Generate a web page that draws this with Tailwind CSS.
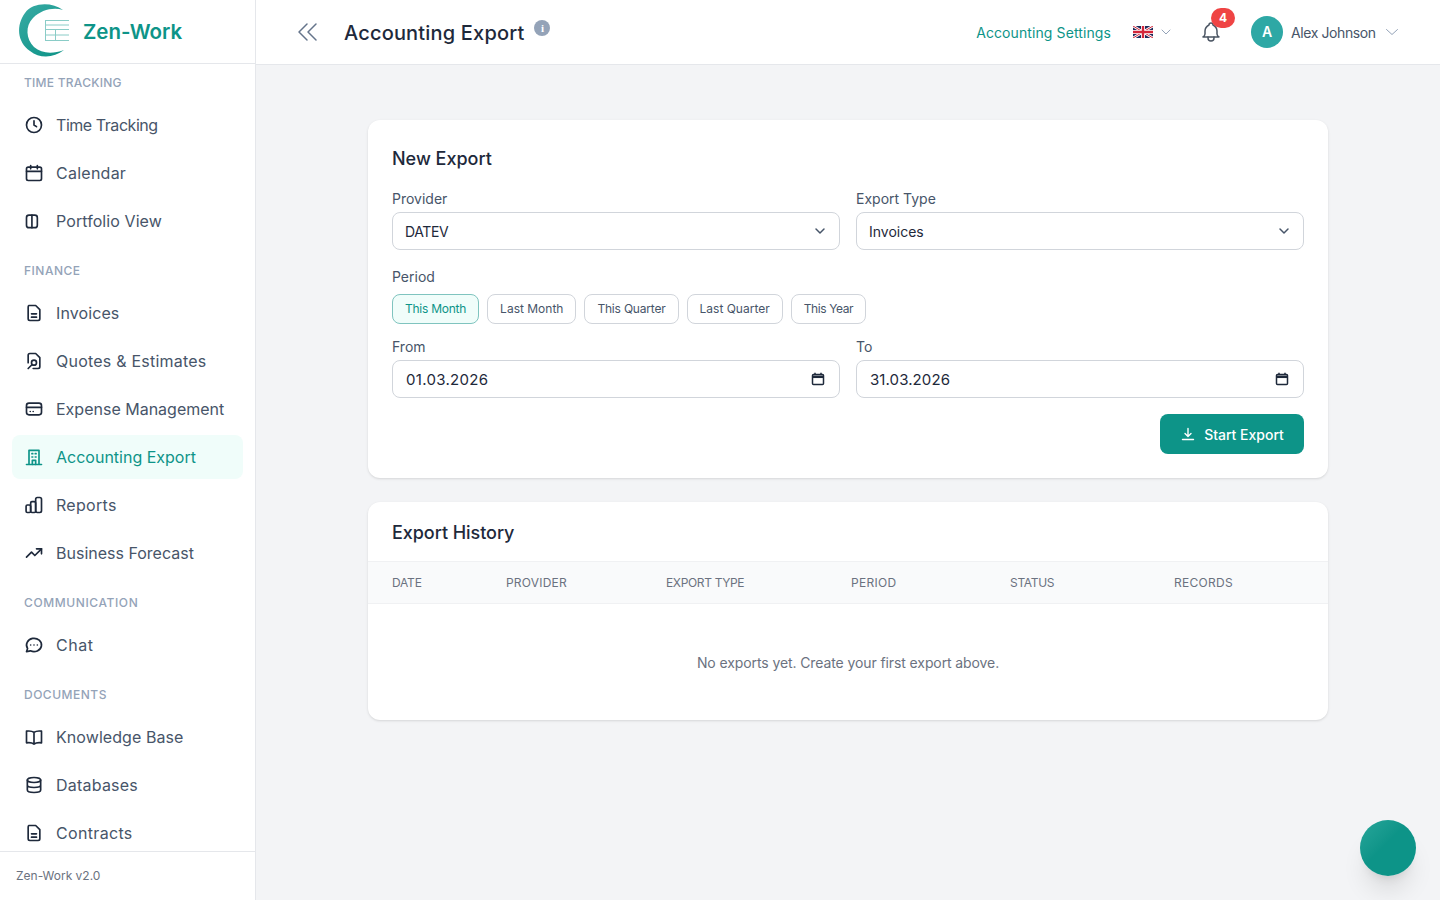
<!DOCTYPE html>
<html lang="en">
<head>
    <meta charset="UTF-8">
    <title>Accounting Export - Zen-Work</title>
    <script src="https://cdn.jsdelivr.net/npm/@tailwindcss/browser@4"></script>
</head>
<body class="font-['Inter',sans-serif] bg-[#f3f4f6]">
<div class="flex h-[900px] w-[1440px] overflow-hidden">
    <!-- Sidebar -->
    <aside class="w-[256px] shrink-0 h-full bg-white border-r border-[#e5e7eb] flex flex-col">
        <div class="h-[64px] shrink-0 border-b border-[#e5e7eb] flex items-center relative">
            <svg class="absolute left-0 top-0" width="80" height="64" viewBox="0 0 80 64" fill="none">
                <defs>
                    <linearGradient id="logoArc" x1="20" y1="10" x2="60" y2="56" gradientUnits="userSpaceOnUse">
                        <stop offset="0" stop-color="#35a9a2"/>
                        <stop offset="1" stop-color="#0f9488"/>
                    </linearGradient>
                </defs>
                <path d="M63 10C52 2 33 2 25 13C16 25 17 42 30 51C40 59 54 58 64 50C53 54 42 54 34 47C26 39 25 26 33 18C41 10 53 7 63 10Z" fill="url(#logoArc)"/>
                <g stroke="#8accc7" stroke-width="1">
                    <path d="M45 20.500H69M45 25H69M45 29.500H69M45 35H69M45 40.500H69"/>
                    <path d="M45.500 20V41M55.500 30V41"/>
                </g>
            </svg>
            <span class="ml-[83px] mt-[2px] text-[20.500px] tracking-[-0.05px] font-semibold text-[#0d9488] leading-none">Zen-Work</span>
        </div>
        <nav class="flex-1 overflow-hidden pt-[11px] px-3">
            <div class="text-xs font-medium leading-4 tracking-[0.25px] text-[#94a3b8] px-3 mb-[12px]">TIME TRACKING</div>
            <div class="flex flex-col gap-1">
                <a class="h-[44px] rounded-lg flex items-center gap-3 px-3 text-base tracking-[-0.45px] text-[#475569]">
                    <svg class="w-5 h-5 text-[#1e293b]" viewBox="0 0 24 24" fill="none" stroke="currentColor" stroke-width="2" stroke-linecap="round" stroke-linejoin="round"><circle cx="12" cy="12" r="9"/><path d="M12 7v5l3 2"/></svg>
                    Time Tracking
                </a>
                <a class="h-[44px] rounded-lg flex items-center gap-3 px-3 text-base tracking-[0.25px] text-[#475569]">
                    <svg class="w-5 h-5 text-[#1e293b]" viewBox="0 0 24 24" fill="none" stroke="currentColor" stroke-width="2" stroke-linecap="round" stroke-linejoin="round"><rect x="3" y="5" width="18" height="16" rx="2"/><path d="M8 3v4M16 3v4M3 10h18"/></svg>
                    Calendar
                </a>
                <a class="h-[44px] rounded-lg flex items-center gap-3 px-3 text-base tracking-[0.08px] text-[#475569]">
                    <svg class="w-5 h-5 text-[#1e293b]" viewBox="0 0 24 24" fill="none" stroke="currentColor" stroke-width="2" stroke-linecap="round" stroke-linejoin="round"><rect x="3" y="5" width="13" height="15" rx="3"/><path d="M9.500 5v15"/></svg>
                    Portfolio View
                </a>
            </div>
            <div class="text-xs font-medium leading-4 tracking-[0.5px] text-[#94a3b8] px-3 mt-[20px] mb-[12px]">FINANCE</div>
            <div class="flex flex-col gap-1">
                <a class="h-[44px] rounded-lg flex items-center gap-3 px-3 text-base tracking-[0.1px] text-[#475569]">
                    <svg class="w-5 h-5 text-[#1e293b]" viewBox="0 0 24 24" fill="none" stroke="currentColor" stroke-width="2" stroke-linecap="round" stroke-linejoin="round"><path d="M6 3h8l5 5v11a2 2 0 0 1-2 2H7a2 2 0 0 1-2-2V5a2 2 0 0 1 1-2z"/><path d="M9 13h6M9 17h6"/></svg>
                    Invoices
                </a>
                <a class="h-[44px] rounded-lg flex items-center gap-3 px-3 text-base tracking-[0.22px] text-[#475569]">
                    <svg class="w-5 h-5 text-[#1e293b]" viewBox="0 0 24 24" fill="none" stroke="currentColor" stroke-width="2" stroke-linecap="round" stroke-linejoin="round"><path d="M5 14V5a2 2 0 0 1 2-2h7l5 5v11a2 2 0 0 1-2 2h-6"/><circle cx="12" cy="14" r="3"/><path d="M9.500 16.500L5 21"/></svg>
                    Quotes &amp; Estimates
                </a>
                <a class="h-[44px] rounded-lg flex items-center gap-3 px-3 text-base text-[#475569]">
                    <svg class="w-5 h-5 text-[#1e293b]" viewBox="0 0 24 24" fill="none" stroke="currentColor" stroke-width="2" stroke-linecap="round" stroke-linejoin="round"><rect x="3" y="5" width="18" height="14" rx="3"/><path d="M3 10h18M7.500 15h.01M11 15h.01"/></svg>
                    Expense Management
                </a>
                <a class="h-[44px] rounded-lg flex items-center gap-3 px-3 text-base text-[#0d9488] bg-[#f0fdfa]">
                    <svg class="w-5 h-5" viewBox="0 0 24 24" fill="none" stroke="currentColor" stroke-width="2" stroke-linecap="round" stroke-linejoin="round"><path d="M3 21h18M6 21V4h12v17"/><path d="M9.500 8h1M13.500 8h1M9.500 12h1M13.500 12h1M10 21v-5h4v5"/></svg>
                    Accounting Export
                </a>
                <a class="h-[44px] rounded-lg flex items-center gap-3 px-3 text-base tracking-[0.3px] text-[#475569]">
                    <svg class="w-5 h-5 text-[#1e293b]" viewBox="0 0 24 24" fill="none" stroke="currentColor" stroke-width="2" stroke-linecap="round" stroke-linejoin="round"><rect x="2.500" y="12" width="5.500" height="9" rx="1.500"/><rect x="8" y="8" width="6" height="13" rx="1.500"/><rect x="14" y="3" width="7" height="18" rx="2"/></svg>
                    Reports
                </a>
                <a class="h-[44px] rounded-lg flex items-center gap-3 px-3 text-base text-[#475569]">
                    <svg class="w-5 h-5 text-[#1e293b]" viewBox="0 0 24 24" fill="none" stroke="currentColor" stroke-width="2" stroke-linecap="round" stroke-linejoin="round"><path d="M3 17l6-6 4 4 8-8"/><path d="M15 7h6v6"/></svg>
                    Business Forecast
                </a>
            </div>
            <div class="text-xs font-medium leading-4 tracking-[0.6px] text-[#94a3b8] px-3 mt-[20px] mb-[12px]">COMMUNICATION</div>
            <div class="flex flex-col gap-1">
                <a class="h-[44px] rounded-lg flex items-center gap-3 px-3 text-base tracking-[0.5px] text-[#475569]">
                    <svg class="w-5 h-5 text-[#1e293b]" viewBox="0 0 24 24" fill="none" stroke="currentColor" stroke-width="2" stroke-linecap="round" stroke-linejoin="round"><path d="M3 20l1.300-3.900A9 8 0 1 1 7.700 19L3 20z"/><path d="M8 12h.01M12 12h.01M16 12h.01"/></svg>
                    Chat
                </a>
            </div>
            <div class="text-xs font-medium leading-4 tracking-[0.5px] text-[#94a3b8] px-3 mt-[20px] mb-[12px]">DOCUMENTS</div>
            <div class="flex flex-col gap-1">
                <a class="h-[44px] rounded-lg flex items-center gap-3 px-3 text-base tracking-[0.07px] text-[#475569]">
                    <svg class="w-5 h-5 text-[#1e293b]" viewBox="0 0 24 24" fill="none" stroke="currentColor" stroke-width="2" stroke-linecap="round" stroke-linejoin="round"><path d="M12 6.500C10 5 7 4.500 3 5v14c4-.5 7 0 9 1.500 2-1.500 5-2 9-1.500V5c-4-.5-7 0-9 1.500zM12 6.500v14"/></svg>
                    Knowledge Base
                </a>
                <a class="h-[44px] rounded-lg flex items-center gap-3 px-3 text-base tracking-[0.22px] text-[#475569]">
                    <svg class="w-5 h-5 text-[#1e293b]" viewBox="0 0 24 24" fill="none" stroke="currentColor" stroke-width="2" stroke-linecap="round" stroke-linejoin="round"><ellipse cx="12" cy="6" rx="8" ry="3"/><path d="M4 6v12c0 1.700 3.600 3 8 3s8-1.300 8-3V6M4 12c0 1.700 3.600 3 8 3s8-1.300 8-3"/></svg>
                    Databases
                </a>
                <a class="h-[44px] rounded-lg flex items-center gap-3 px-3 text-base tracking-[0.33px] text-[#475569]">
                    <svg class="w-5 h-5 text-[#1e293b]" viewBox="0 0 24 24" fill="none" stroke="currentColor" stroke-width="2" stroke-linecap="round" stroke-linejoin="round"><path d="M6 3h8l5 5v11a2 2 0 0 1-2 2H7a2 2 0 0 1-2-2V5a2 2 0 0 1 1-2z"/><path d="M9 13h6M9 17h6"/></svg>
                    Contracts
                </a>
            </div>
        </nav>
        <div class="h-[49px] shrink-0 border-t border-[#e5e7eb] px-4 flex items-center text-xs text-[#6b7280]">Zen-Work v2.0</div>
    </aside>

    <div class="flex-1 flex flex-col min-w-0">
        <!-- Header -->
        <header class="h-[65px] shrink-0 bg-white border-b border-[#e5e7eb] flex items-center pl-[40px] pr-[42px]">
            <svg class="w-6 h-6 text-[#64748b]" viewBox="0 0 24 24" fill="none" stroke="currentColor" stroke-width="1.500" stroke-linecap="round" stroke-linejoin="round"><path d="M11 4l-8 8 8 8M20 4l-8 8 8 8"/></svg>
            <h1 class="ml-[24px] mt-[2px] text-[20px] tracking-[0.18px] font-medium text-[#1e293b] leading-none">Accounting Export</h1>
            <span class="ml-[10px] mb-[8px] w-4 h-4 rounded-full bg-[#94a3b8] text-white text-[11px] font-bold flex items-center justify-center leading-none font-['Liberation_Serif',serif]">i</span>
            <a class="ml-auto mt-[2px] text-sm tracking-[0.1px] text-[#0d9488]">Accounting Settings</a>
            <svg class="ml-[22px]" width="20" height="12" viewBox="0 0 60 36">
                <rect width="60" height="36" fill="#1e2a5a"/>
                <path d="M0 0L60 36M60 0L0 36" stroke="#fff" stroke-width="8"/>
                <path d="M0 0L60 36M60 0L0 36" stroke="#d3263a" stroke-width="3"/>
                <path d="M30 0V36M0 18H60" stroke="#fff" stroke-width="12"/>
                <path d="M30 0V36M0 18H60" stroke="#d3263a" stroke-width="7"/>
            </svg>
            <svg class="ml-[7px] w-3 h-3 text-[#94a3b8]" viewBox="0 0 12 12" fill="none" stroke="currentColor" stroke-width="1" stroke-linecap="round" stroke-linejoin="round"><path d="M2 4l4 4 4-4"/></svg>
            <div class="relative ml-[27px] w-6 h-6 text-[#4b5563]">
                <svg class="w-6 h-6" viewBox="0 0 24 24" fill="none" stroke="currentColor" stroke-width="1.500" stroke-linecap="round" stroke-linejoin="round"><path d="M10 5a2 2 0 1 1 4 0 7 7 0 0 1 4 6v3a4 4 0 0 0 2 3H4a4 4 0 0 0 2-3v-3a7 7 0 0 1 4-6"/><path d="M9 17v1a3 3 0 0 0 6 0v-1"/></svg>
                <span class="absolute left-[12px] top-[-12px] w-6 h-5 rounded-full bg-[#ef4444] text-white text-xs font-bold flex items-center justify-center">4</span>
            </div>
            <div class="ml-[28px] w-8 h-8 rounded-full bg-[#2ea8a5] text-white text-sm font-semibold flex items-center justify-center">A</div>
            <span class="ml-2 mt-[2px] w-[85px] whitespace-nowrap text-sm tracking-[-0.4px] text-[#475569]">Alex Johnson</span>
            <svg class="ml-[10px] w-3 h-3 text-[#94a3b8]" viewBox="0 0 12 12" fill="none" stroke="currentColor" stroke-width="1" stroke-linecap="round" stroke-linejoin="round"><path d="M.5 3.500l5.500 5 5.500-5"/></svg>
        </header>

        <!-- Main -->
        <main class="flex-1 pt-[55px] relative">
            <div class="w-[960px] mx-auto flex flex-col gap-6">
                <section class="bg-white rounded-xl shadow-sm p-6">
                    <h2 class="text-lg font-medium text-[#1e293b] leading-7 pt-[1px]">New Export</h2>
                    <div class="grid grid-cols-2 gap-4 mt-[16px]">
                        <div>
                            <label class="block text-sm leading-5 text-[#475569] mb-[3px]">Provider</label>
                            <div class="h-[38px] rounded-lg border border-[#d1d5db] flex items-center justify-between pl-3 pr-[11px] text-sm text-[#1e293b]">
                                <span class="mt-[2px] tracking-[-0.4px]">DATEV</span>
                                <svg class="w-4 h-4 text-[#475569]" viewBox="0 0 16 16" fill="none" stroke="currentColor" stroke-width="1.500" stroke-linecap="round" stroke-linejoin="round"><path d="M4 6l4 4 4-4"/></svg>
                            </div>
                        </div>
                        <div>
                            <label class="block text-sm leading-5 text-[#475569] mb-[3px]">Export Type</label>
                            <div class="h-[38px] rounded-lg border border-[#d1d5db] flex items-center justify-between pl-3 pr-[11px] text-sm text-[#1e293b]">
                                <span class="mt-[2px]">Invoices</span>
                                <svg class="w-4 h-4 text-[#475569]" viewBox="0 0 16 16" fill="none" stroke="currentColor" stroke-width="1.500" stroke-linecap="round" stroke-linejoin="round"><path d="M4 6l4 4 4-4"/></svg>
                            </div>
                        </div>
                    </div>
                    <label class="block text-sm leading-5 text-[#475569] mt-[17px]">Period</label>
                    <div class="flex gap-2 mt-[7px]">
                        <button class="h-[30px] px-3 rounded-lg border border-[#7fc4bf] bg-[#f0fdfa] text-xs tracking-[-0.25px] text-[#0d9488]">This Month</button>
                        <button class="h-[30px] px-3 rounded-lg border border-[#d1d5db] text-xs text-[#475569]">Last Month</button>
                        <button class="h-[30px] px-3 rounded-lg border border-[#d1d5db] text-xs tracking-[-0.2px] text-[#475569]">This Quarter</button>
                        <button class="h-[30px] px-3 rounded-lg border border-[#d1d5db] text-xs text-[#475569]">Last Quarter</button>
                        <button class="h-[30px] px-3 rounded-lg border border-[#d1d5db] text-xs tracking-[-0.4px] text-[#475569]">This Year</button>
                    </div>
                    <div class="grid grid-cols-2 gap-4 mt-[13px]">
                        <div>
                            <label class="block text-sm leading-5 text-[#475569] mb-[3px]">From</label>
                            <div class="h-[38px] rounded-lg border border-[#d1d5db] flex items-center justify-between pl-[13px] pr-[14px] text-[15px] tracking-[0.3px] text-[#1e293b]">
                                <span class="mt-[2px]">01.03.2026</span>
                                <svg class="w-[14px] h-[14px] text-[#1e293b]" viewBox="0 0 14 14" fill="none" stroke="currentColor" stroke-width="1.500"><rect x="1.500" y="2.500" width="11" height="10" rx="1"/><path d="M1.500 4.800h11" stroke-width="2.500"/><path d="M4 .8v2M10 .8v2"/></svg>
                            </div>
                        </div>
                        <div>
                            <label class="block text-sm leading-5 text-[#475569] mb-[3px]">To</label>
                            <div class="h-[38px] rounded-lg border border-[#d1d5db] flex items-center justify-between pl-[13px] pr-[14px] text-[15px] tracking-[0.1px] text-[#1e293b]">
                                <span class="mt-[2px]">31.03.2026</span>
                                <svg class="w-[14px] h-[14px] text-[#1e293b]" viewBox="0 0 14 14" fill="none" stroke="currentColor" stroke-width="1.500"><rect x="1.500" y="2.500" width="11" height="10" rx="1"/><path d="M1.500 4.800h11" stroke-width="2.500"/><path d="M4 .8v2M10 .8v2"/></svg>
                            </div>
                        </div>
                    </div>
                    <div class="flex justify-end mt-4">
                        <button class="w-[144px] h-[40px] rounded-lg bg-[#0d9488] text-white text-sm font-medium flex items-center justify-center gap-2">
                            <svg class="w-4 h-4" viewBox="0 0 16 16" fill="none" stroke="currentColor" stroke-width="1.400" stroke-linecap="round" stroke-linejoin="round"><path d="M8 2.500v7.500M5 7.500L8 10.500l3-3M2.500 13.500h11"/></svg>
                            <span class="mt-[2px]">Start Export</span>
                        </button>
                    </div>
                </section>

                <section class="bg-white rounded-xl shadow-sm">
                    <h2 class="text-lg font-medium text-[#1e293b] leading-7 tracking-[-0.05px] px-6 pt-[17px] pb-[14px]">Export History</h2>
                    <table class="w-full table-fixed">
                        <thead>
                            <tr class="h-[42px] bg-[#f9fafb] border-y border-[#f0f1f3] text-xs text-[#6b7280] text-left">
                                <th class="w-[138px] pl-6 font-normal tracking-[-0.2px]">DATE</th>
                                <th class="w-[160px] font-normal tracking-[0.2px]">PROVIDER</th>
                                <th class="w-[185px] font-normal tracking-[-0.35px]">EXPORT TYPE</th>
                                <th class="w-[159px] font-normal tracking-[0.3px]">PERIOD</th>
                                <th class="w-[164px] font-normal tracking-[-0.3px]">STATUS</th>
                                <th class="font-normal tracking-[0.3px]">RECORDS</th>
                            </tr>
                        </thead>
                        <tbody>
                            <tr class="h-[116px]">
                                <td colspan="6" class="pt-[2px] text-center text-sm tracking-[-0.1px] text-[#6b7280]">No exports yet. Create your first export above.</td>
                            </tr>
                        </tbody>
                    </table>
                </section>
            </div>
            <div class="absolute left-[1104px] top-[755px] w-14 h-14 rounded-full bg-gradient-to-br from-[#26a69a] via-[#0d9488] via-45% to-[#0d9488] shadow-xl"></div>
        </main>
    </div>
</div>
</body>
</html>
